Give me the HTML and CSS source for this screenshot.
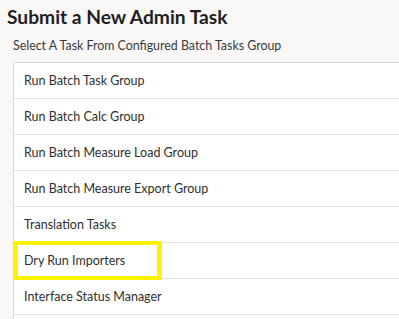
FILE: index.html
```html
<!DOCTYPE html>
<html>
<head>
<meta charset="utf-8">
<link rel="stylesheet" href="styles.css">
</head>
<body>
<div class="page">
  <h1 class="title">Submit a New Admin Task</h1>
  <div class="subtitle">Select A Task From Configured Batch Tasks Group</div>
  <ul class="task-list">
    <li class="task">Run Batch Task Group</li>
    <li class="task">Run Batch Calc Group</li>
    <li class="task">Run Batch Measure Load Group</li>
    <li class="task">Run Batch Measure Export Group</li>
    <li class="task">Translation Tasks</li>
    <li class="task">Dry Run Importers<span class="highlight"></span></li>
    <li class="task">Interface Status Manager</li>
    <li class="task"></li>
  </ul>
</div>
</body>
</html>
```

FILE: styles.css
```css
html, body {
  margin: 0;
  padding: 0;
  background: #f9f8f7;
  overflow: hidden;
}
.page {
  font-family: "Lato", "Noto Sans", sans-serif;
  color: #2f2f2f;
  padding-top: 4px;
}
.title {
  margin: 0 0 0 7px;
  font-size: 19.2px;
  font-weight: 700;
  line-height: 26px;
  color: #1f1f1f;
}
.subtitle {
  margin: 8px 0 0 13px;
  font-size: 12.4px;
  line-height: 16px;
  color: #3a3a3a;
}
.task-list {
  list-style: none;
  margin: 8px 0 0 13px;
  padding: 0;
  background: #fff;
  border-left: 1px solid #dcdcdc;
  border-top: 1px solid #dcdcdc;
}
.task {
  position: relative;
  height: 35px;
  border-bottom: 1px solid #e2e2e2;
  padding-left: 10px;
  font-size: 12.5px;
  line-height: 35px;
  color: #2f2f2f;
}
.highlight {
  position: absolute;
  left: -1px;
  top: -2px;
  width: 149px;
  height: 39px;
  box-sizing: border-box;
  border-style: solid;
  border-color: #fff200;
  border-width: 4px 5px;
}
```
